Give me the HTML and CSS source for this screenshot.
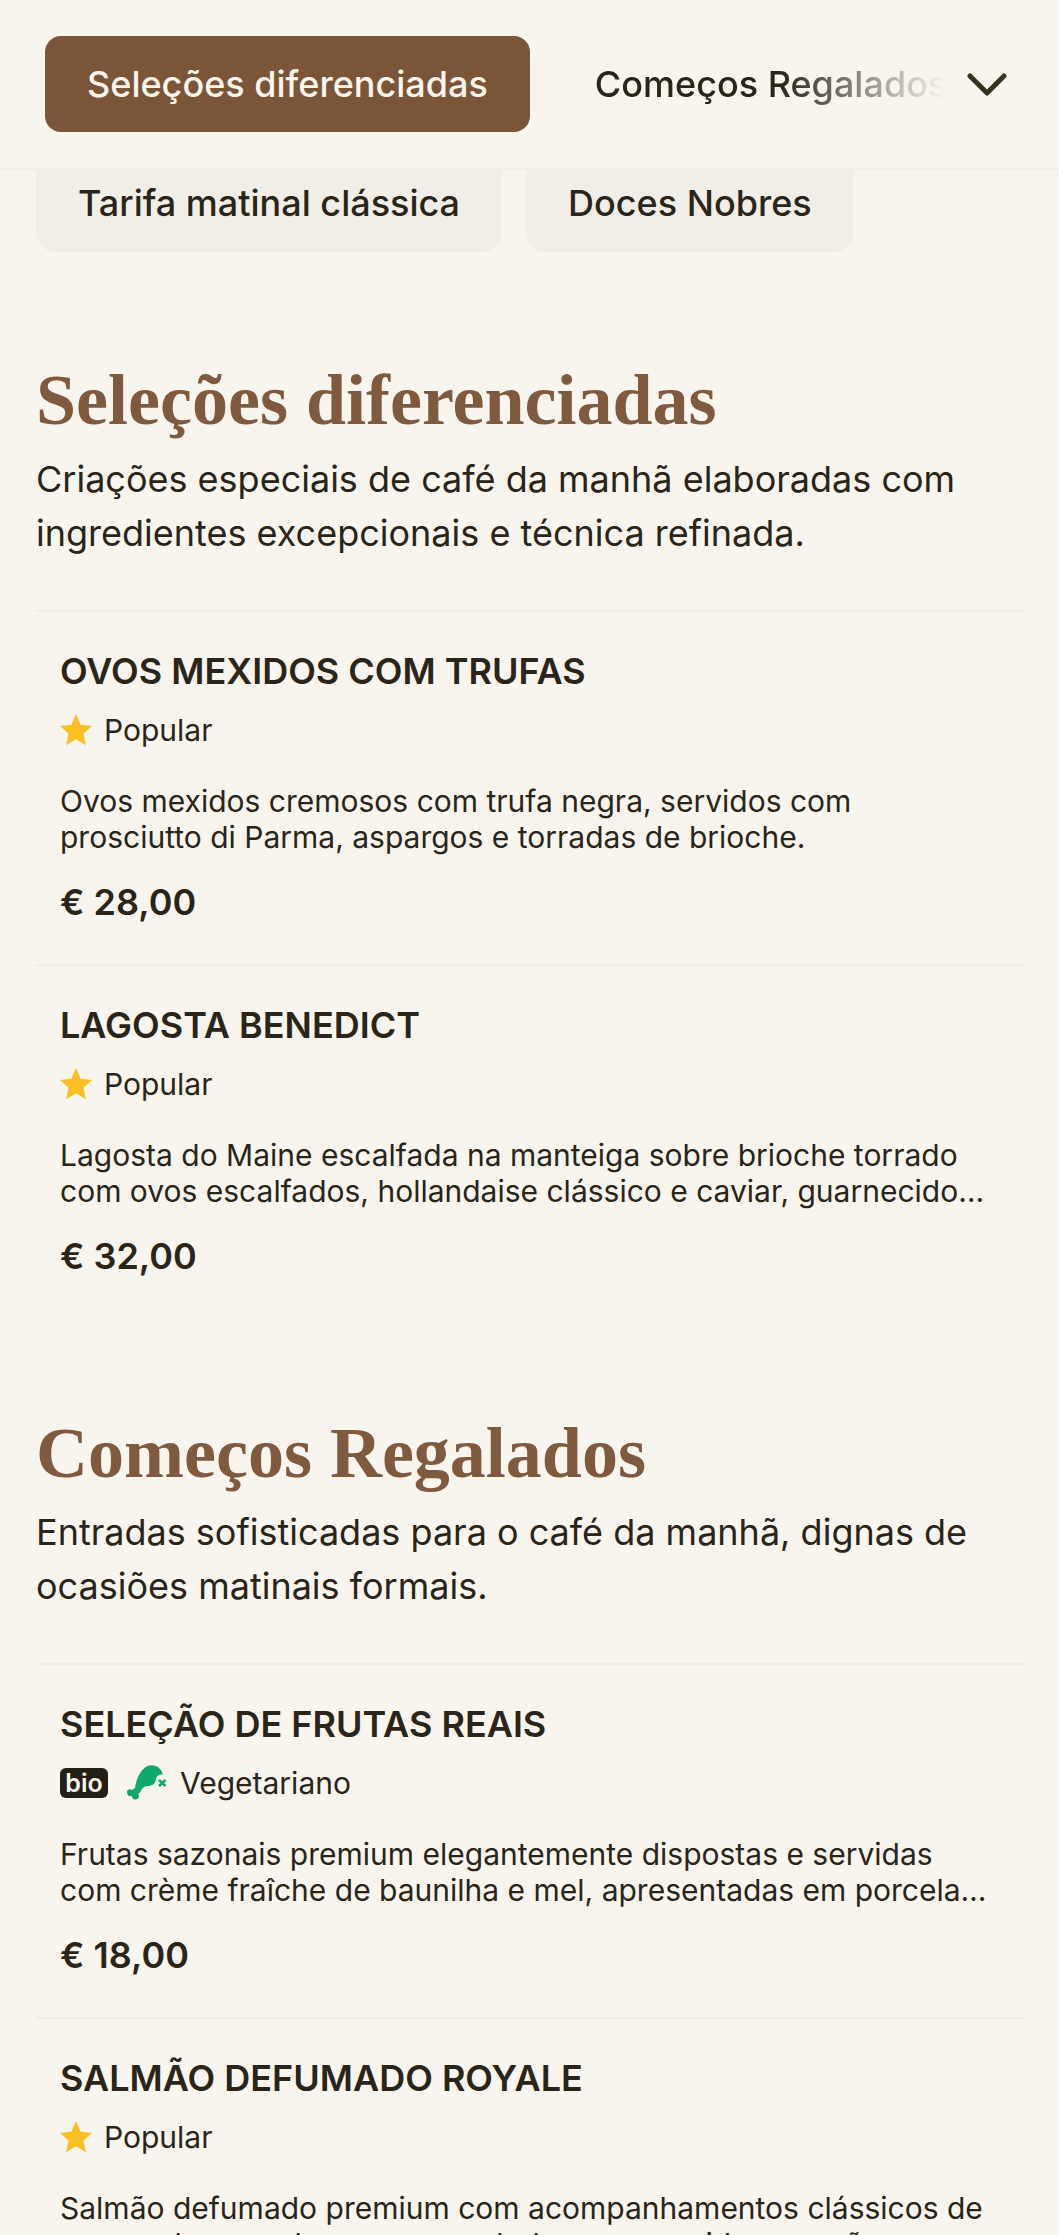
FILE: index.html
```html
<!DOCTYPE html>
<html lang="pt">
<head>
<meta charset="utf-8">
<title>Menu</title>
<link rel="stylesheet" href="styles.css">
</head>
<body>
<header class="topbar">
  <nav class="tabs">
    <a class="tab tab-active">Seleções diferenciadas</a>
    <div class="tab-fade"><a class="tab">Começos Regalados</a></div>
  </nav>
  <button class="chevron" aria-label="Mais">
    <svg width="40" height="23" viewBox="0 0 40 23"><path d="M3 3 L20 20 L37 3" fill="none" stroke="#37321f" stroke-width="5" stroke-linecap="round" stroke-linejoin="round"/></svg>
  </button>
</header>
<div class="chips">
  <a class="chip">Tarifa matinal clássica</a>
  <a class="chip">Doces Nobres</a>
</div>
<main>
  <section class="section">
    <h2>Seleções diferenciadas</h2>
    <p class="lead">Criações especiais de café da manhã elaboradas com ingredientes excepcionais e técnica refinada.</p>
    <article class="item">
      <h3>OVOS MEXIDOS COM TRUFAS</h3>
      <div class="tags"><svg class="star" viewBox="0 0 24 24"><path d="M12 0L15.500 8L24 9L17.600 14.800L19.400 23.500L12 19L4.600 23.500L6.400 14.800L0 9L8.500 8Z"/></svg><span>Popular</span></div>
      <p class="desc">Ovos mexidos cremosos com trufa negra, servidos com prosciutto di Parma, aspargos e torradas de brioche.</p>
      <div class="price">€ 28,00</div>
    </article>
    <article class="item">
      <h3>LAGOSTA BENEDICT</h3>
      <div class="tags"><svg class="star" viewBox="0 0 24 24"><path d="M12 0L15.500 8L24 9L17.600 14.800L19.400 23.500L12 19L4.600 23.500L6.400 14.800L0 9L8.500 8Z"/></svg><span>Popular</span></div>
      <p class="desc">Lagosta do Maine escalfada na manteiga sobre brioche torrado com ovos escalfados, hollandaise clássico e caviar, guarnecido com ervas frescas e finas.</p>
      <div class="price">€ 32,00</div>
    </article>
  </section>
  <section class="section">
    <h2>Começos Regalados</h2>
    <p class="lead">Entradas sofisticadas para o café da manhã, dignas de ocasiões matinais formais.</p>
    <article class="item">
      <h3>SELEÇÃO DE FRUTAS REAIS</h3>
      <div class="tags"><span class="bio">bio</span><svg class="leg" viewBox="0 0 42 36"><path d="M1 27C1 24.500 4 23.500 6 25L9 23C10 16 13 7 19 2.500C23-.5 29-.5 33 3C35 5 36.500 7 36.500 9.500C32.500 9.500 30.500 11 30 14C29.500 19 26 21 22 21C18 21 15.500 23 14.500 27L12 29C14 31 13 34 10 34.500C7 35 6 33 6 31C3 32 1 30 1 27Z"/><path class="x" d="M33 15l6.500 6M39.500 15L33 21"/></svg><span>Vegetariano</span></div>
      <p class="desc">Frutas sazonais premium elegantemente dispostas e servidas com crème fraîche de baunilha e mel, apresentadas em porcelana fina com folhas de hortelã fresca.</p>
      <div class="price">€ 18,00</div>
    </article>
    <article class="item">
      <h3>SALMÃO DEFUMADO ROYALE</h3>
      <div class="tags"><svg class="star" viewBox="0 0 24 24"><path d="M12 0L15.500 8L24 9L17.600 14.800L19.400 23.500L12 19L4.600 23.500L6.400 14.800L0 9L8.500 8Z"/></svg><span>Popular</span></div>
      <p class="desc">Salmão defumado premium com acompanhamentos clássicos de cream cheese, alcaparras e cebola roxa, servido com pão artesanal torrado.</p>
      <div class="price">€ 30,00</div>
    </article>
  </section>
</main>
</body>
</html>
```
FILE: styles.css
```css
* { box-sizing: border-box; margin: 0; padding: 0; }
html, body { height: 2235px; overflow: hidden; }
body { background: #f8f5ef; color: #2a2518; font-family: Inter, "Liberation Sans", sans-serif; }

.topbar { height: 170px; display: flex; align-items: center; padding: 0 42px 0 45px; border-bottom: 2px solid #f1eee8; background: #f8f5ef; }
.tabs { flex: 1; min-width: 0; display: flex; align-items: center; gap: 23px; overflow: hidden; }
.tab { display: block; flex: none; font-size: 36px; font-weight: 500; line-height: 96px; white-space: nowrap; padding: 0 42px; border-radius: 16px; }
.tab-active { background: #7a5537; color: #f8f5ef; }
.tab-fade { flex: 1; min-width: 0; overflow: hidden; -webkit-mask-image: linear-gradient(90deg, #000 58%, transparent 100%); mask-image: linear-gradient(90deg, #000 58%, transparent 100%); }
.chevron { flex: none; background: none; border: 0; width: 60px; height: 40px; display: flex; align-items: center; justify-content: center; margin-left: 12px; }

.chips { display: flex; gap: 24px; padding: 0 36px; }
.chip { display: block; height: 82px; line-height: 66px; padding: 0 42px; font-size: 36px; font-weight: 500; background: #f1eee8; border-radius: 0 0 20px 20px; }

.section { padding: 0 36px; }
.section + .section { margin-top: 93px; }
.section:first-child { margin-top: 106px; }
h2 { font-family: "Liberation Serif", serif; font-weight: 700; font-size: 72px; line-height: 84px; color: #7f5a3e; }
.lead { font-size: 36px; line-height: 54px; margin-top: 10px; margin-bottom: 50px; }
.item { border-top: 2px solid #f0ede7; padding: 37px 24px 0; height: 354px; }
h3 { font-size: 36px; font-weight: 600; line-height: 44px; }
.tags { display: flex; align-items: center; gap: 12px; font-size: 30px; line-height: 40px; margin-top: 17px; }
.star { width: 32px; height: 32px; fill: #fbbf24; }
.bio { background: #231f14; color: #f8f5ef; font-size: 25px; font-weight: 600; line-height: 30px; width: 48px; text-align: center; border-radius: 6px; margin-right: 6px; }
.leg { width: 42px; height: 36px; fill: #10a96c; }
.leg .x { fill: none; stroke: #10a96c; stroke-width: 2.5; }
.desc { font-size: 30px; line-height: 36px; margin-top: 33px; display: -webkit-box; -webkit-box-orient: vertical; -webkit-line-clamp: 2; overflow: hidden; }
.price { font-size: 36px; font-weight: 600; line-height: 46px; margin-top: 24px; }
```
